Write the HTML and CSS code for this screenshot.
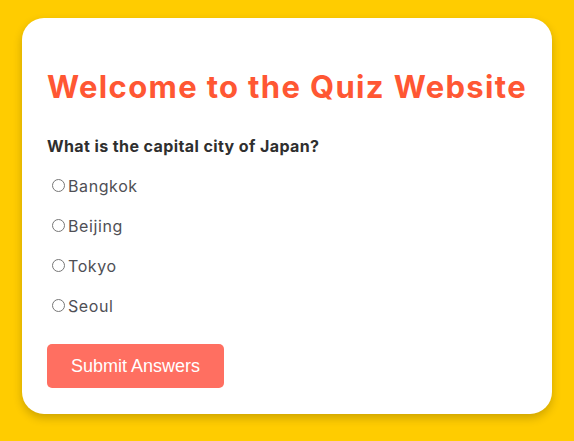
FILE: index.html
```html
<!DOCTYPE html>
<html lang="en">
<head>
<meta charset="utf-8">
<title>Quiz Website</title>
<link rel="stylesheet" href="styles.css">
</head>
<body>
<main class="quiz-card">
  <h1 class="quiz-title">Welcome to the Quiz Website</h1>
  <form class="quiz-form">
    <p class="question">What is the capital city of Japan?</p>
    <div class="options">
      <label class="option"><input type="radio" name="q1" value="Bangkok">Bangkok</label>
      <label class="option"><input type="radio" name="q1" value="Beijing">Beijing</label>
      <label class="option"><input type="radio" name="q1" value="Tokyo">Tokyo</label>
      <label class="option"><input type="radio" name="q1" value="Seoul">Seoul</label>
    </div>
    <button type="submit" class="submit-btn">Submit Answers</button>
  </form>
</main>
</body>
</html>
```
FILE: styles.css
```css
html, body {
  margin: 0;
  background: #ffcc00;
}
body {
  padding: 18px 22px;
  font-family: Inter, "Open Sans", sans-serif;
}
.quiz-card {
  background: #ffffff;
  border-radius: 22px;
  padding: 25px 25px 26px 25px;
  box-shadow: 0 4px 10px rgba(0, 0, 0, 0.2);
}
.quiz-title {
  margin: 26px 0 0 0;
  font-size: 31px;
  line-height: 36px;
  font-weight: 700;
  letter-spacing: 1.35px;
  color: #ff5733;
  white-space: nowrap;
}
.quiz-form {
  display: flex;
  flex-direction: column;
  align-items: flex-start;
}
.question {
  margin: 29px 0 16px 0;
  font-size: 16px;
  line-height: 24px;
  font-weight: 700;
  letter-spacing: 0.4px;
  color: #2f2f2f;
}
.options {
  display: flex;
  flex-direction: column;
  gap: 16px;
}
.option {
  display: block;
  font-size: 16px;
  line-height: 24px;
  letter-spacing: 0.6px;
  color: #4f4f55;
}
.option input {
  margin: 3px 3px 0 5px;
}
.submit-btn {
  margin-top: 26px;
  padding: 12px 24px;
  border: none;
  border-radius: 5px;
  background: #ff6f61;
  color: #ffffff;
  font-family: "Liberation Sans", Arial, sans-serif;
  font-size: 18px;
  line-height: 20px;
  cursor: pointer;
}
```
